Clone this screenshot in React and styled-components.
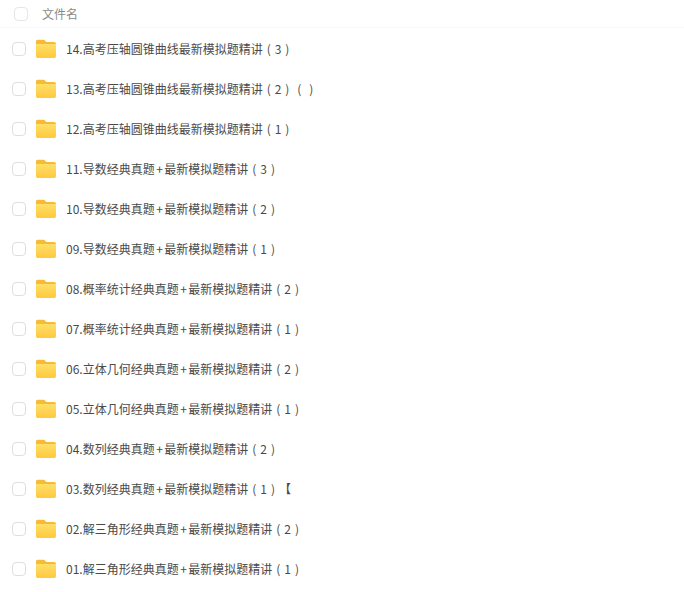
import styled, { createGlobalStyle } from 'styled-components'

const GlobalStyle = createGlobalStyle`
	html, body {
		margin: 0;
		padding: 0;
		background: #fff;
	}
	body {
		font-family: "Noto Sans CJK SC", "Liberation Sans", sans-serif;
	}
`

const Container = styled.div`
	width: 684px;
	height: 592px;
	overflow: hidden;
`
const Header = styled.div`
	display: flex;
	align-items: center;
	height: 27px;
	padding-left: 14px;
	border-bottom: 1px solid #f7f7f7;
	margin-bottom: 1px;
`
const HeaderText = styled.span`
	margin-left: 14px;
	font-size: 12px;
	line-height: 26px;
	color: #8a8a8a;
`
const Row = styled.div`
	display: flex;
	align-items: center;
	height: 40px;
	padding-left: 12px;
`
const Check = styled.span`
	flex: none;
	box-sizing: border-box;
	width: 14px;
	height: 14px;
	border: 1px solid ${(props) => (props.$head ? '#e6e6e6' : '#dedede')};
	border-radius: 4px;
	background: #fff;
`
const FolderSvg = styled.svg`
	flex: none;
	margin-left: 9px;
`
const Name = styled.span`
	margin-left: 9px;
	margin-top: -2px;
	font-size: 12px;
	color: #4a4a4a;
	white-space: pre;
`
// the round brackets sit in the middle of their full-width box here
const Bracket = styled.span`
	display: inline-block;
	width: 12px;
	text-align: center;
`
const Plus = styled.span`
	margin: 0 1.5px;
`

const Folder = () => (
	<FolderSvg width="22" height="20" viewBox="0 0 22 20">
		<defs>
			<linearGradient id="folderFront" x1="0" y1="0" x2="0" y2="1">
				<stop offset="0" stopColor="#ffdf6b" />
				<stop offset="1" stopColor="#ffc93c" />
			</linearGradient>
		</defs>
		<path d="M1 2.600C1 1.500 1.700 .8 2.800 .8h5.600c.8 0 1.300.3 1.800.9L11.400 3H19c1.200 0 2 .8 2 2v3H1z" fill="#f7bc35" />
		<path d="M1 5h20v12.200c0 1.100-.8 1.800-2 1.800H3c-1.200 0-2-.7-2-1.800z" fill="url(#folderFront)" />
	</FolderSvg>
)

const files = [
	['14.高考压轴圆锥曲线最新模拟题精讲', '3'],
	['13.高考压轴圆锥曲线最新模拟题精讲', '2', ' '],
	['12.高考压轴圆锥曲线最新模拟题精讲', '1'],
	['11.导数经典真题+最新模拟题精讲', '3'],
	['10.导数经典真题+最新模拟题精讲', '2'],
	['09.导数经典真题+最新模拟题精讲', '1'],
	['08.概率统计经典真题+最新模拟题精讲', '2'],
	['07.概率统计经典真题+最新模拟题精讲', '1'],
	['06.立体几何经典真题+最新模拟题精讲', '2'],
	['05.立体几何经典真题+最新模拟题精讲', '1'],
	['04.数列经典真题+最新模拟题精讲', '2'],
	['03.数列经典真题+最新模拟题精讲', '1', null, '【'],
	['02.解三角形经典真题+最新模拟题精讲', '2'],
	['01.解三角形经典真题+最新模拟题精讲', '1'],
]

const App = () => (
	<Container>
		<GlobalStyle />
		<Header>
			<Check $head />
			<HeaderText>文件名</HeaderText>
		</Header>
		{files.map(([name, part, extra, tail]) => {
			const [before, after] = name.split('+')
			return (
				<Row key={name}>
					<Check />
					<Folder />
					<Name>
						{before}
						{after && <Plus>+</Plus>}
						{after}
						<Bracket>(</Bracket>{part}<Bracket>)</Bracket>
						{extra && <><Bracket>(</Bracket><Bracket>)</Bracket></>}
						{tail}
					</Name>
				</Row>
			)
		})}
	</Container>
)

export default App
